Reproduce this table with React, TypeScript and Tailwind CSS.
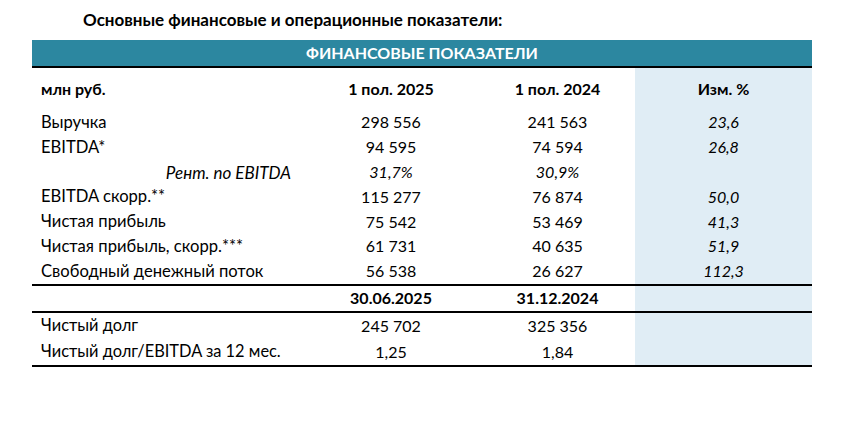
const rows = [
  { label: "Выручка", a: "298 556", b: "241 563", c: "23,6" },
  { label: "EBITDA*", a: "94 595", b: "74 594", c: "26,8" },
  { label: "Рент. по EBITDA", a: "31,7%", b: "30,9%", c: "", italic: true },
  { label: "EBITDA скорр.**", a: "115 277", b: "76 874", c: "50,0" },
  { label: "Чистая прибыль", a: "75 542", b: "53 469", c: "41,3" },
  { label: "Чистая прибыль, скорр.***", a: "61 731", b: "40 635", c: "51,9" },
  { label: "Свободный денежный поток", a: "56 538", b: "26 627", c: "112,3" },
];

const debtRows = [
  { label: "Чистый долг", a: "245 702", b: "325 356" },
  { label: "Чистый долг/EBITDA за 12 мес.", a: "1,25", b: "1,84" },
];

const grid = "grid grid-cols-[270px_178px_155px_177px]";

export default function App() {
  return (
    <div
      className="w-[848px] h-[432px] bg-white text-black text-[16px]"
      style={{ fontFamily: "Lato, 'Open Sans', sans-serif" }}
    >
      {/* Title */}
      <div className="pt-[10px] pl-[83px] h-[40px] text-[17px] font-bold leading-[20px]">
        Основные финансовые и операционные показатели:
      </div>

      <div className="ml-[32px] w-[780px]">
        {/* Teal header band */}
        <div className="h-[26px] bg-[#2c87a0] border-b-2 border-black box-content flex items-center justify-center text-white font-bold">
          ФИНАНСОВЫЕ ПОКАЗАТЕЛИ
        </div>

        {/* Column headings */}
        <div className={`${grid} h-[42px] items-center font-bold`}>
          <div className="pl-[9px]">млн руб.</div>
          <div className="text-center">1 пол. 2025</div>
          <div className="text-center">1 пол. 2024</div>
          <div className="text-center bg-[#e0edf5] h-full flex items-center justify-center">Изм. %</div>
        </div>

        {/* Main rows */}
        {rows.map((r) => (
          <div key={r.label} className={`${grid} h-[24.8px] items-center`}>
            {r.italic ? (
              <div className="italic text-right pr-[11px] text-[17px]">{r.label}</div>
            ) : (
              <div className="pl-[9px] text-[16.6px]">{r.label}</div>
            )}
            <div className={`text-center ${r.italic ? "italic" : ""}`}>{r.a}</div>
            <div className={`text-center ${r.italic ? "italic" : ""}`}>{r.b}</div>
            <div className="italic text-center bg-[#e0edf5] h-full flex items-center justify-center">{r.c}</div>
          </div>
        ))}

        {/* Date row */}
        <div className={`${grid} h-[25px] items-center font-bold border-t-2 border-b-2 border-black box-content`}>
          <div />
          <div className="text-center">30.06.2025</div>
          <div className="text-center">31.12.2024</div>
          <div className="bg-[#e0edf5] h-full" />
        </div>

        {/* Debt rows */}
        <div className="border-b-2 border-black">
          {debtRows.map((r) => (
            <div key={r.label} className={`${grid} h-[26px] items-center`}>
              <div className="pl-[9px] text-[16.4px]">{r.label}</div>
              <div className="text-center">{r.a}</div>
              <div className="text-center">{r.b}</div>
              <div className="bg-[#e0edf5] h-full" />
            </div>
          ))}
        </div>
      </div>
    </div>
  );
}
